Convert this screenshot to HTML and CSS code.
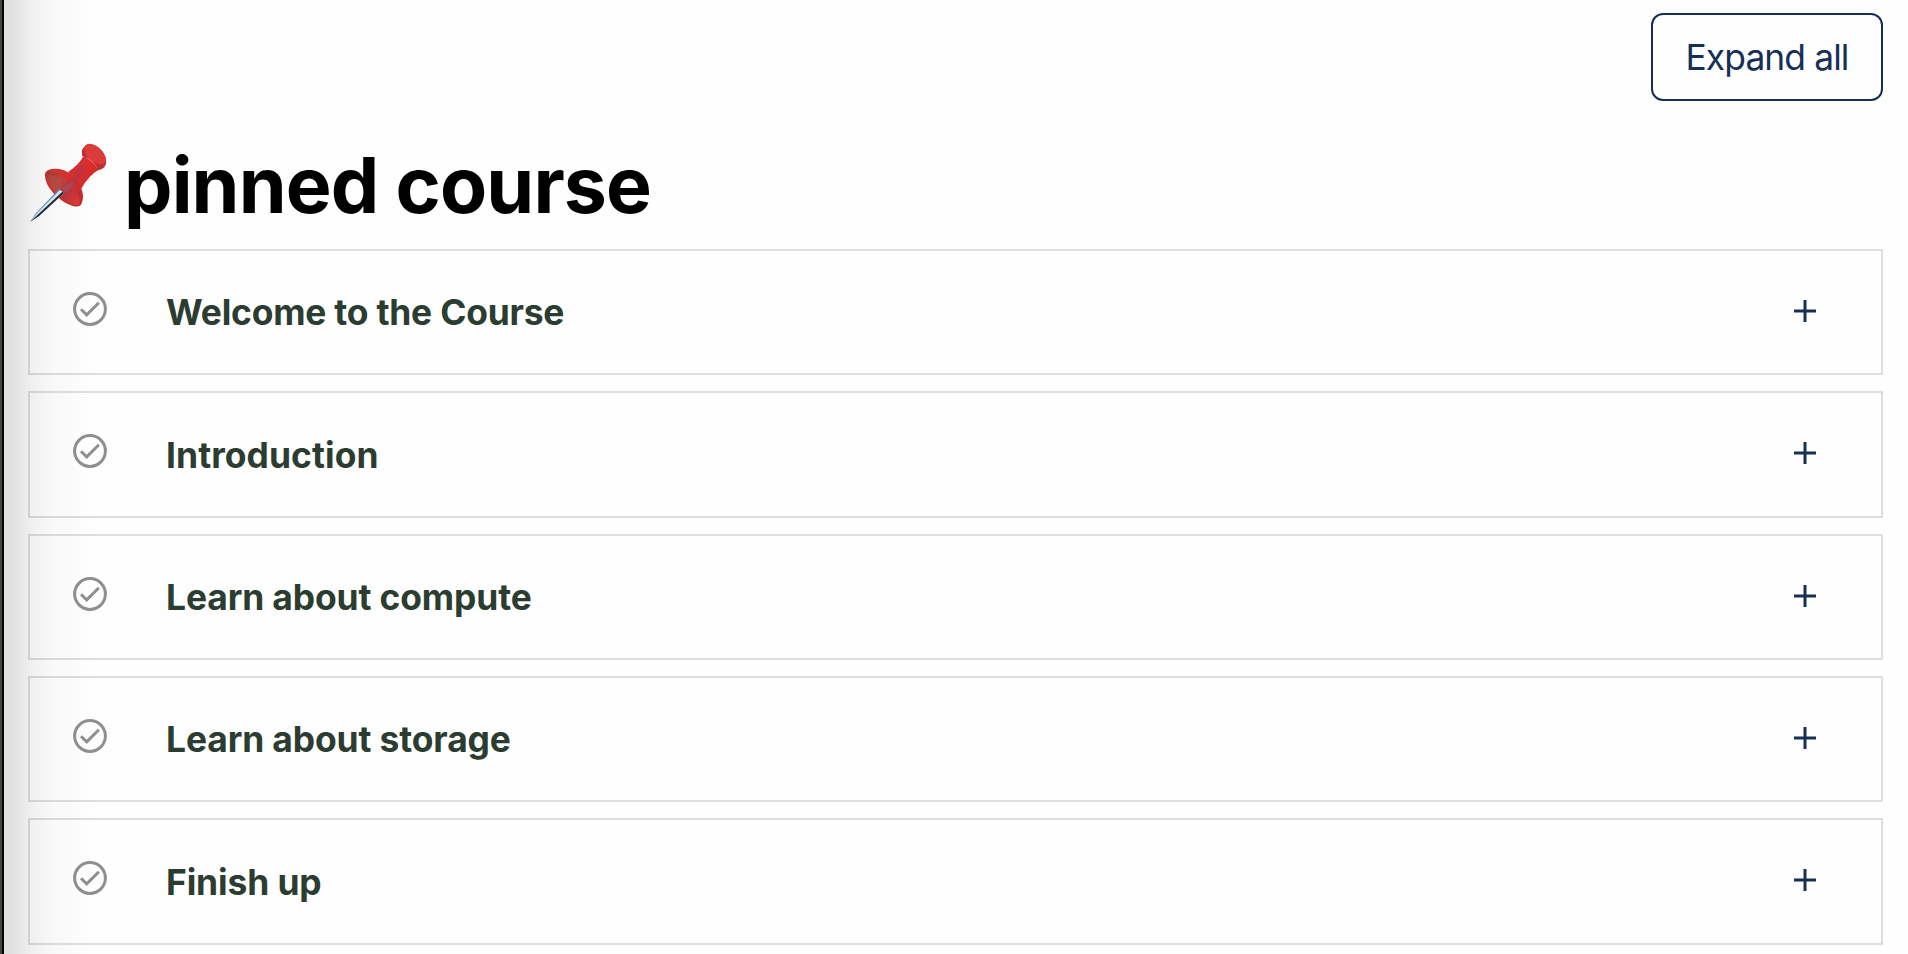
FILE: index.html
```html
<!DOCTYPE html>
<html lang="en">
<head>
<meta charset="utf-8">
<title>pinned course</title>
<link rel="stylesheet" href="styles.css">
</head>
<body>
<svg class="symbols" width="0" height="0">
  <symbol id="check" viewBox="0 0 34 34">
    <circle cx="17" cy="17" r="15.4" fill="none" stroke="#8f8f8f" stroke-width="3"/>
    <path d="M8 17.2 L13.7 22.8 L25.9 10.7" fill="none" stroke="#8f8f8f" stroke-width="3"/>
  </symbol>
  <symbol id="plus" viewBox="0 0 22 22">
    <path d="M11 0V22M0 11H22" fill="none" stroke="#162f55" stroke-width="3"/>
  </symbol>
</svg>
<div class="edge"></div>
<main class="page">
  <div class="toolbar"><button class="expand"><span class="expand-label">Expand all</span></button></div>
  <h1 class="heading">
    <svg class="pin" viewBox="0 0 100 95">
      <defs>
        <linearGradient id="body" x1="0" y1="0" x2="1" y2="1">
          <stop offset="0" stop-color="#c93a3c"/><stop offset=".5" stop-color="#dc2d2a"/><stop offset="1" stop-color="#b62b30"/>
        </linearGradient>
        <linearGradient id="dish" x1="0" y1="0" x2="1" y2=".9">
          <stop offset="0" stop-color="#a53535"/><stop offset=".35" stop-color="#bd4840"/><stop offset=".6" stop-color="#b8343f"/><stop offset="1" stop-color="#dc3835"/>
        </linearGradient>
      </defs>
      <path d="M64 19 Q59 29 48 36 L61 53 Q69 39 80 33Z" fill="url(#body)"/>
      <path d="M62 14Q64 9 71 9C79 9 88 20 86 28Q84 34 77 34Q76 29 70 24Q65 20 62 20Z" fill="#bd3034"/>
      <ellipse cx="75" cy="18" rx="13" ry="7.3" transform="rotate(42 75 18)" fill="#dc3c39"/>
      <path d="M25 38C26 31 43 31 50 38C58 43 66 57 62 66Q61 72 53 70C40 66 24 51 25 38Z" fill="url(#body)"/>
      <path d="M27 37C29 33 39 37 47 45C56 52 62 64 59 69C53 72 25 54 27 37Z" fill="url(#dish)"/>
      <path d="M28 39Q34 37 43 46L39 58Q27 47 28 39Z" fill="#b75040" opacity=".5"/>
      <path d="M48 47L61 29Q65 29 66 32L54 51Z" fill="#99385d" opacity=".4"/>
      <path d="M42 52L50 47Q53 45 54 48L46 57Z" fill="#a05a66" opacity=".6"/>
      <path d="M66 22Q73 24 77 32" fill="none" stroke="#ee6660" stroke-width="1.2" opacity=".6"/>
      <path d="M39 53L44 57L19 80L10 86L16 77Z" fill="#6288b3"/>
      <path d="M40 54L44 57L19 80L10 86L17 77Z" fill="#d5ecf8"/>
      <path d="M42.3 55.7L44 57L19 80L10 86Z" fill="#24262b"/>
    </svg>
    <span class="heading-text">pinned course</span>
  </h1>
  <div class="list">
    <section class="row"><svg class="check"><use href="#check"/></svg><h2 class="title welcome">Welcome to the Course</h2><svg class="plus"><use href="#plus"/></svg></section>
    <section class="row"><svg class="check"><use href="#check"/></svg><h2 class="title intro">Introduction</h2><svg class="plus"><use href="#plus"/></svg></section>
    <section class="row"><svg class="check"><use href="#check"/></svg><h2 class="title">Learn about compute</h2><svg class="plus"><use href="#plus"/></svg></section>
    <section class="row"><svg class="check"><use href="#check"/></svg><h2 class="title">Learn about storage</h2><svg class="plus"><use href="#plus"/></svg></section>
    <section class="row"><svg class="check"><use href="#check"/></svg><h2 class="title">Finish up</h2><svg class="plus"><use href="#plus"/></svg></section>
  </div>
</main>
<div class="shade"></div>
</body>
</html>
```
FILE: styles.css
```css
* { box-sizing: border-box; }
body {
  margin: 0;
  height: 954px;
  overflow: hidden;
  display: flex;
  background: #fefefe;
  font-family: Inter, "Liberation Sans", sans-serif;
}
.symbols { position: absolute; }
.edge {
  flex: none;
  width: 4px;
  background: linear-gradient(90deg, #494238 0 2px, #000 2px 4px);
}
/* soft shadow cast over the left side of the content */
.shade {
  position: absolute;
  left: 4px;
  top: 0;
  width: 90px;
  height: 954px;
  pointer-events: none;
  background: linear-gradient(90deg, rgba(0,0,0,.125), rgba(0,0,0,.098) 14px, rgba(0,0,0,.055) 28px, rgba(0,0,0,.025) 48px, rgba(0,0,0,.01) 70px, transparent);
}
.page { flex: 1; padding: 13px 25px 0 24px; }
.toolbar { display: flex; justify-content: flex-end; }
.expand {
  width: 232px;
  height: 88px;
  padding: 2px 0 0;
  border: 2px solid #162f55;
  border-radius: 12px;
  background: transparent;
  color: #162f55;
  font: 430 35.4px/82px Inter, "Liberation Sans", sans-serif;
  letter-spacing: -.9px;
  white-space: nowrap;
}
.heading {
  display: flex;
  height: 148px;
  margin: 0;
  padding-top: 34px;
}
.pin { flex: none; width: 100px; height: 95px; margin: 1px 0 0 -8px; }
.heading-text {
  margin-left: 4px;
  font-size: 77px;
  font-weight: 720;
  line-height: 100px;
  letter-spacing: -.9px;
  white-space: nowrap;
  color: #000;
}
.list { display: flex; flex-direction: column; gap: 16px; }
.row {
  display: flex;
  height: 126.35px;
  padding: 0 65px 0 43px;
  border: 2px solid #dedede;
}
.check { flex: none; width: 34px; height: 34px; margin-top: 41px; }
.title {
  flex: 1;
  margin: 40.3px 0 0 59px;
  font-size: 35.4px;
  font-weight: 700;
  line-height: 44px;
  letter-spacing: -.12px;
  color: #2b3d30;
}
.title.welcome { letter-spacing: -.2px; }
.title.intro { letter-spacing: .08px; }
.plus { flex: none; width: 22px; height: 22px; margin-top: 49px; }
```
